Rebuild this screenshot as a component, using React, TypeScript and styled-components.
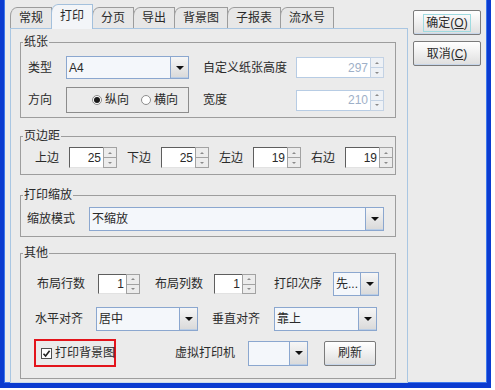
import React from 'react';
import styled, { createGlobalStyle } from 'styled-components';

const Global = createGlobalStyle`
  html, body { margin: 0; padding: 0; background: #ffffff; }
  body {
    font-family: "Liberation Sans", "Noto Sans CJK SC", sans-serif;
    font-size: 12px;
    color: #2a2a2a;
  }
  * { box-sizing: border-box; }
`;

const Window = styled.div`
  width: 491px;
  height: 388px;
  display: flex;
  background: #ebebeb;
  border-left: 4px solid #0b3bd0;
  border-right: 4px solid #0b3bd0;
  border-bottom: 5px solid #0b3bd0;
  box-shadow: inset 1px 0 0 #3d78ec, inset -1px 0 0 #3d78ec, inset 0 -1px 0 #3d78ec;
`;

const Main = styled.div`
  margin-left: 6px;
  width: 398px;
  padding-top: 4px;
  display: flex;
  flex-direction: column;
`;

const TabRow = styled.div`
  height: 24px;
  display: flex;
  align-items: flex-end;
  position: relative;
  z-index: 1;
`;

const Tab = styled.div<{ $active?: boolean }>`
  height: ${(p) => (p.$active ? 25 : 21)}px;
  margin-bottom: ${(p) => (p.$active ? -1 : 0)}px;
  margin-left: -1px;
  &:first-child { margin-left: 0; }
  padding: 0 8px 0 8px;
  display: flex;
  align-items: center;
  justify-content: center;
  font-size: 12px;
  line-height: 14px;
  color: #2a2a2a;
  border: 1px solid ${(p) => (p.$active ? '#a3c0dc' : '#9c9c9c')};
  border-bottom: none;
  border-top-left-radius: 7px 9px;
  background: ${(p) => (p.$active ? '#f3f5f8' : '#e7e7e7')};
  position: relative;
  z-index: ${(p) => (p.$active ? 2 : 0)};
  padding-bottom: ${(p) => (p.$active ? 2 : 0)}px;
`;

const Panel = styled.div`
  flex: 1;
  border: 1px solid #a9c6e2;
  border-bottom-color: #c9dbeb;
  background: #ebebeb;
  padding: 6px 11px 0 9px;
`;

const Group = styled.fieldset<{ $pt: number; $pb: number; $mt?: number }>`
  margin: ${(p) => p.$mt ?? 0}px 0 0 0;
  padding: ${(p) => p.$pt}px 0 ${(p) => p.$pb}px 0;
  border: 1px solid #9d9d9d;
  min-width: 0;
`;

const Legend = styled.legend`
  margin-left: 2px;
  padding: 0 1px;
  font-size: 12px;
  line-height: 14px;
  color: #2a2a2a;
`;

const Row = styled.div<{ $pl: number; $h: number; $mt?: number }>`
  display: flex;
  align-items: center;
  height: ${(p) => p.$h}px;
  padding-left: ${(p) => p.$pl}px;
  margin-top: ${(p) => p.$mt ?? 0}px;
`;

const Label = styled.span<{ $w: number; $ml?: number }>`
  width: ${(p) => p.$w}px;
  margin-left: ${(p) => p.$ml ?? 0}px;
  flex: none;
  font-size: 12px;
  line-height: 14px;
  white-space: nowrap;
  color: #2a2a2a;
`;

/* ---------- combo ---------- */
const ComboBox = styled.div<{ $w: number; $h: number; $ml?: number }>`
  width: ${(p) => p.$w}px;
  height: ${(p) => p.$h}px;
  margin-left: ${(p) => p.$ml ?? 0}px;
  flex: none;
  display: flex;
  border: 1px solid #8ba7cf;
  background: #f4f7fb;
`;

const ComboText = styled.div`
  flex: 1;
  display: flex;
  align-items: center;
  padding-left: 2px;
  font-size: 12px;
  line-height: 14px;
  overflow: hidden;
  white-space: nowrap;
`;

const ComboArrow = styled.div`
  width: 18px;
  flex: none;
  border-left: 1px solid #8ba7cf;
  background: linear-gradient(#f6f6f6, #e6e6e6 55%, #d9d9d9);
  display: flex;
  align-items: center;
  justify-content: center;
  box-shadow: inset 0 -1px 0 #b9cde6;
`;

const DownTri = styled.span`
  width: 0;
  height: 0;
  border-left: 4px solid transparent;
  border-right: 4px solid transparent;
  border-top: 4px solid #111;
`;

const Combo = ({ w, h = 24, ml, text }: { w: number; h?: number; ml?: number; text: string }) => (
  <ComboBox $w={w} $h={h} $ml={ml}>
    <ComboText>{text}</ComboText>
    <ComboArrow>
      <DownTri />
    </ComboArrow>
  </ComboBox>
);

/* ---------- spinner ---------- */
const SpinBox = styled.div<{ $w: number; $h: number; $ml?: number }>`
  width: ${(p) => p.$w}px;
  height: ${(p) => p.$h}px;
  margin-left: ${(p) => p.$ml ?? 0}px;
  flex: none;
  display: flex;
`;

const SpinField = styled.div<{ $disabled?: boolean }>`
  flex: 1;
  background: #ffffff;
  border-top: 1px solid ${(p) => (p.$disabled ? '#b7cce4' : '#5e5e5e')};
  border-left: 1px solid ${(p) => (p.$disabled ? '#b7cce4' : '#5e5e5e')};
  border-bottom: 1px solid ${(p) => (p.$disabled ? '#b7cce4' : '#e2e2e2')};
  display: flex;
  align-items: center;
  justify-content: flex-end;
  padding-right: 2px;
  font-family: "Liberation Sans", sans-serif;
  font-size: 12px;
  color: ${(p) => (p.$disabled ? '#9eb0c8' : '#2a2a2a')};
`;

const SpinBtns = styled.div`
  width: 14px;
  flex: none;
  display: flex;
  flex-direction: column;
`;

const SpinBtn = styled.div<{ $disabled?: boolean; $down?: boolean }>`
  flex: 1;
  border: 1px solid ${(p) => (p.$disabled ? '#c3d2e4' : '#a2a2a2')};
  margin-top: ${(p) => (p.$down ? -1 : 0)}px;
  background: ${(p) => (p.$disabled ? '#eef1f5' : '#ececec')};
  display: flex;
  align-items: center;
  justify-content: center;
`;

const TinyTri = styled.span<{ $down?: boolean }>`
  width: 0;
  height: 0;
  border-left: 2px solid transparent;
  border-right: 2px solid transparent;
  ${(p) => (p.$down ? 'border-top: 2px solid #8a8a8a;' : 'border-bottom: 2px solid #8a8a8a;')}
`;

const Spin = ({ w, h = 21, ml, value, disabled }: { w: number; h?: number; ml?: number; value: string; disabled?: boolean }) => (
  <SpinBox $w={w} $h={h} $ml={ml}>
    <SpinField $disabled={disabled}>{value}</SpinField>
    <SpinBtns>
      <SpinBtn $disabled={disabled}>
        <TinyTri />
      </SpinBtn>
      <SpinBtn $disabled={disabled} $down>
        <TinyTri $down />
      </SpinBtn>
    </SpinBtns>
  </SpinBox>
);

/* ---------- radio ---------- */
const RadioFrame = styled.div`
  width: 123px;
  height: 26px;
  flex: none;
  border: 1px solid #8c8c8c;
  display: flex;
  align-items: center;
  padding-left: 25px;
`;

const RadioDot = styled.span<{ $on?: boolean; $ml?: number }>`
  width: 10px;
  height: 10px;
  margin-left: ${(p) => p.$ml ?? 0}px;
  border-radius: 50%;
  border: 1px solid #8d8d8d;
  background: #ffffff;
  display: flex;
  align-items: center;
  justify-content: center;
  &::after {
    content: '';
    width: 6px;
    height: 6px;
    border-radius: 50%;
    background: ${(p) => (p.$on ? '#1a1a1a' : 'transparent')};
  }
`;

const RadioText = styled.span`
  margin-left: 3px;
  font-size: 12px;
  line-height: 14px;
`;

/* ---------- buttons ---------- */
const Side = styled.div`
  margin-left: 5px;
  width: 68px;
  padding-top: 10px;
  display: flex;
  flex-direction: column;
  gap: 6px;
`;

const Button = styled.div<{ $w: number; $h: number; $ml?: number }>`
  width: ${(p) => p.$w}px;
  height: ${(p) => p.$h}px;
  margin-left: ${(p) => p.$ml ?? 0}px;
  flex: none;
  border: 1px solid #7b7b7b;
  border-radius: 2px;
  background: linear-gradient(#ffffff, #f1f1f1 45%, #dedede);
  box-shadow: inset 0 -1px 0 #c7d6ea;
  display: flex;
  align-items: center;
  justify-content: center;
  font-size: 12px;
  line-height: 14px;
`;

const BtnLabel = styled.span<{ $focus?: boolean }>`
  padding: 1px 2px;
  outline: ${(p) => (p.$focus ? '1px solid #9fdbe0' : 'none')};
`;

const Mnemonic = styled.span`
  text-decoration: underline;
`;

/* ---------- checkbox ---------- */
const CheckFrame = styled.div`
  width: 82px;
  height: 28px;
  flex: none;
  border: 2px solid #e3141b;
  display: flex;
  align-items: center;
  padding-left: 5px;
`;

const CheckBox = styled.span`
  width: 11px;
  height: 11px;
  flex: none;
  border: 1px solid #4f4f4f;
  background: #ffffff;
  display: flex;
  align-items: center;
  justify-content: center;
`;

const CheckText = styled.span`
  margin-left: 3px;
  font-size: 12px;
  line-height: 14px;
  white-space: nowrap;
`;

export default function App() {
  const tabs = ['常规', '打印', '分页', '导出', '背景图', '子报表', '流水号'];
  return (
    <>
      <Global />
      <Window>
        <Main>
          <TabRow>
            {tabs.map((t) => (
              <Tab key={t} $active={t === '打印'}>
                {t}
              </Tab>
            ))}
          </TabRow>
          <Panel>
            <Group $pt={7} $pb={4}>
              <Legend>纸张</Legend>
              <Row $pl={7} $h={23}>
                <Label $w={38}>类型</Label>
                <Combo w={123} h={23} text="A4" />
                <Label $w={93} $ml={14}>自定义纸张高度</Label>
                <Spin w={88} value="297" disabled />
              </Row>
              <Row $pl={7} $h={26} $mt={8}>
                <Label $w={38}>方向</Label>
                <RadioFrame>
                  <RadioDot $on />
                  <RadioText>纵向</RadioText>
                  <RadioDot $ml={12} />
                  <RadioText>横向</RadioText>
                </RadioFrame>
                <Label $w={93} $ml={14}>宽度</Label>
                <Spin w={88} value="210" disabled />
              </Row>
            </Group>

            <Group $pt={4} $pb={6} $mt={11}>
              <Legend>页边距</Legend>
              <Row $pl={14} $h={21}>
                <Label $w={34}>上边</Label>
                <Spin w={48} value="25" />
                <Label $w={34} $ml={10}>下边</Label>
                <Spin w={48} value="25" />
                <Label $w={34} $ml={10}>左边</Label>
                <Spin w={48} value="19" />
                <Label $w={34} $ml={10}>右边</Label>
                <Spin w={48} value="19" />
              </Row>
            </Group>

            <Group $pt={5} $pb={5} $mt={13}>
              <Legend>打印缩放</Legend>
              <Row $pl={6} $h={24}>
                <Label $w={62}>缩放模式</Label>
                <Combo w={295} text="不缩放" />
              </Row>
            </Group>

            <Group $pt={12} $pb={11} $mt={9}>
              <Legend>其他</Legend>
              <Row $pl={16} $h={24}>
                <Label $w={61}>布局行数</Label>
                <Spin w={42} h={20} value="1" />
                <Label $w={59} $ml={15}>布局列数</Label>
                <Spin w={42} h={20} value="1" />
                <Label $w={59} $ml={18}>打印次序</Label>
                <Combo w={46} text="先..." />
              </Row>
              <Row $pl={14} $h={24} $mt={11}>
                <Label $w={61}>水平对齐</Label>
                <Combo w={102} text="居中" />
                <Label $w={62} $ml={14}>垂直对齐</Label>
                <Combo w={103} text="靠上" />
              </Row>
              <Row $pl={13} $h={28} $mt={8}>
                <CheckFrame>
                  <CheckBox>
                    <svg width="9" height="9" viewBox="0 0 9 9">
                      <path d="M1.5 4.8 L3.6 7 L7.6 1.8" fill="none" stroke="#222" strokeWidth="1.6" />
                    </svg>
                  </CheckBox>
                  <CheckText>打印背景图</CheckText>
                </CheckFrame>
                <Label $w={73} $ml={59}>虚拟打印机</Label>
                <Combo w={60} h={25} text="" />
                <Button $w={52} $h={25} $ml={16}>
                  <BtnLabel>刷新</BtnLabel>
                </Button>
              </Row>
            </Group>
          </Panel>
        </Main>
        <Side>
          <Button $w={68} $h={25}>
            <BtnLabel $focus>
              确定(<Mnemonic>O</Mnemonic>)
            </BtnLabel>
          </Button>
          <Button $w={68} $h={25}>
            <BtnLabel>
              取消(<Mnemonic>C</Mnemonic>)
            </BtnLabel>
          </Button>
        </Side>
      </Window>
    </>
  );
}
